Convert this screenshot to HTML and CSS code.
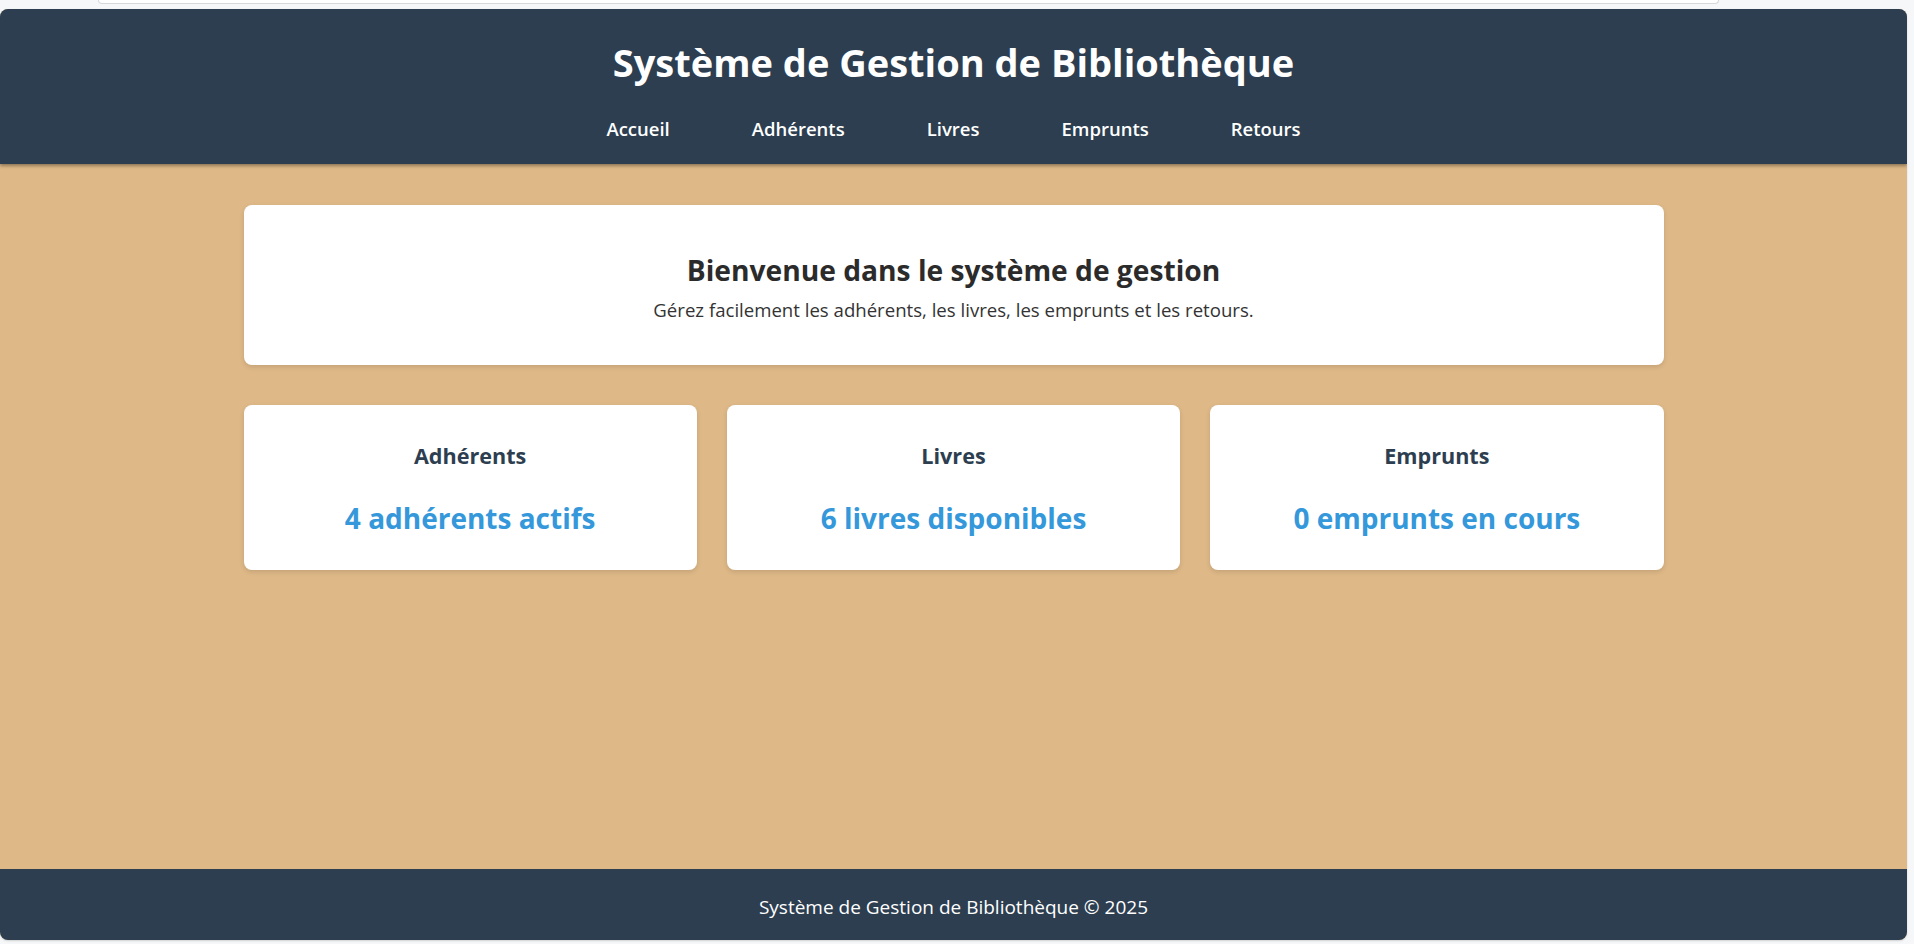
FILE: index.html
```html
<!DOCTYPE html>
<html lang="fr">
<head>
<meta charset="utf-8">
<title>Système de Gestion de Bibliothèque</title>
<link rel="stylesheet" href="styles.css">
</head>
<body>
<div class="chrome"><div class="addressbar"></div></div>
<div class="app">
  <header class="site-header">
    <h1 class="site-title">Système de Gestion de Bibliothèque</h1>
    <nav class="nav">
      <a class="nav-link" href="#">Accueil</a>
      <a class="nav-link" href="#">Adhérents</a>
      <a class="nav-link" href="#">Livres</a>
      <a class="nav-link" href="#">Emprunts</a>
      <a class="nav-link" href="#">Retours</a>
    </nav>
  </header>
  <main class="main">
    <div class="container">
      <section class="welcome card">
        <h2 class="welcome-title">Bienvenue dans le système de gestion</h2>
        <p class="welcome-text">Gérez facilement les adhérents, les livres, les emprunts et les retours.</p>
      </section>
      <div class="stats">
        <div class="stat card">
          <h3 class="stat-title">Adhérents</h3>
          <p class="stat-value">4 adhérents actifs</p>
        </div>
        <div class="stat card">
          <h3 class="stat-title">Livres</h3>
          <p class="stat-value">6 livres disponibles</p>
        </div>
        <div class="stat card">
          <h3 class="stat-title">Emprunts</h3>
          <p class="stat-value">0 emprunts en cours</p>
        </div>
      </div>
    </div>
  </main>
  <footer class="site-footer">Système de Gestion de Bibliothèque © 2025</footer>
</div>
</body>
</html>
```
FILE: styles.css
```css
* { box-sizing: border-box; }
html, body { height: 100%; }
body {
  margin: 0;
  background: #f6f7f8;
  font-family: "Open Sans", "Noto Sans", sans-serif;
  display: flex;
  flex-direction: column;
}
.chrome {
  height: 9px;
  flex: none;
  display: flex;
  padding: 0 195px 0 98px;
}
.addressbar {
  flex: 1;
  height: 4px;
  background: #fff;
  border: 1px solid #d6d8da;
  border-top: none;
  border-radius: 0 0 10px 10px;
}
.app {
  flex: 1;
  margin: 0 7px 4px 0;
  border-radius: 8px;
  overflow: hidden;
  display: flex;
  flex-direction: column;
  background: #deb887;
  box-shadow: 0 1px 2px rgba(0,0,0,0.15);
}
.site-header {
  background: #2c3e50;
  color: #fff;
  padding: 30px 0 15px;
  text-align: center;
  box-shadow: 0 2px 3px rgba(0,0,0,0.35);
  position: relative;
  z-index: 1;
}
.site-title {
  margin: 0;
  font-size: 38px;
  line-height: 46px;
  font-weight: 700;
}
.nav {
  margin-top: 24px;
  display: flex;
  justify-content: center;
  gap: 82px;
}
.nav-link {
  color: #fff;
  text-decoration: none;
  font-weight: 600;
  font-size: 18.5px;
  line-height: 40px;
}
.main {
  flex: 1;
  padding: 41px 0 40px;
}
.container {
  max-width: 1420px;
  margin: 0 auto;
  display: flex;
  flex-direction: column;
  gap: 40px;
}
.card {
  background: #fff;
  border-radius: 8px;
  box-shadow: 0 2px 5px rgba(0,0,0,0.12);
  text-align: center;
}
.welcome {
  padding: 48px 20px 43px;
}
.welcome-title {
  margin: 0 0 10px;
  font-size: 28.2px;
  line-height: 35px;
  font-weight: 700;
  color: #2b2b2b;
}
.welcome-text {
  margin: 0;
  font-size: 18.6px;
  line-height: 24px;
  color: #333;
}
.stats {
  display: grid;
  grid-template-columns: repeat(3, 1fr);
  gap: 30px;
}
.stat {
  padding: 38px 20px 35px;
  display: flex;
  flex-direction: column;
  gap: 33px;
}
.stat-title {
  margin: 0;
  font-size: 21.6px;
  line-height: 25px;
  font-weight: 700;
  color: #2c3e50;
}
.stat-value {
  margin: 0;
  font-size: 28px;
  line-height: 34px;
  font-weight: 700;
  color: #3498db;
}
.site-footer {
  background: #2c3e50;
  color: #fff;
  text-align: center;
  font-size: 19px;
  line-height: 24px;
  padding: 26px 0 21px;
}
```
